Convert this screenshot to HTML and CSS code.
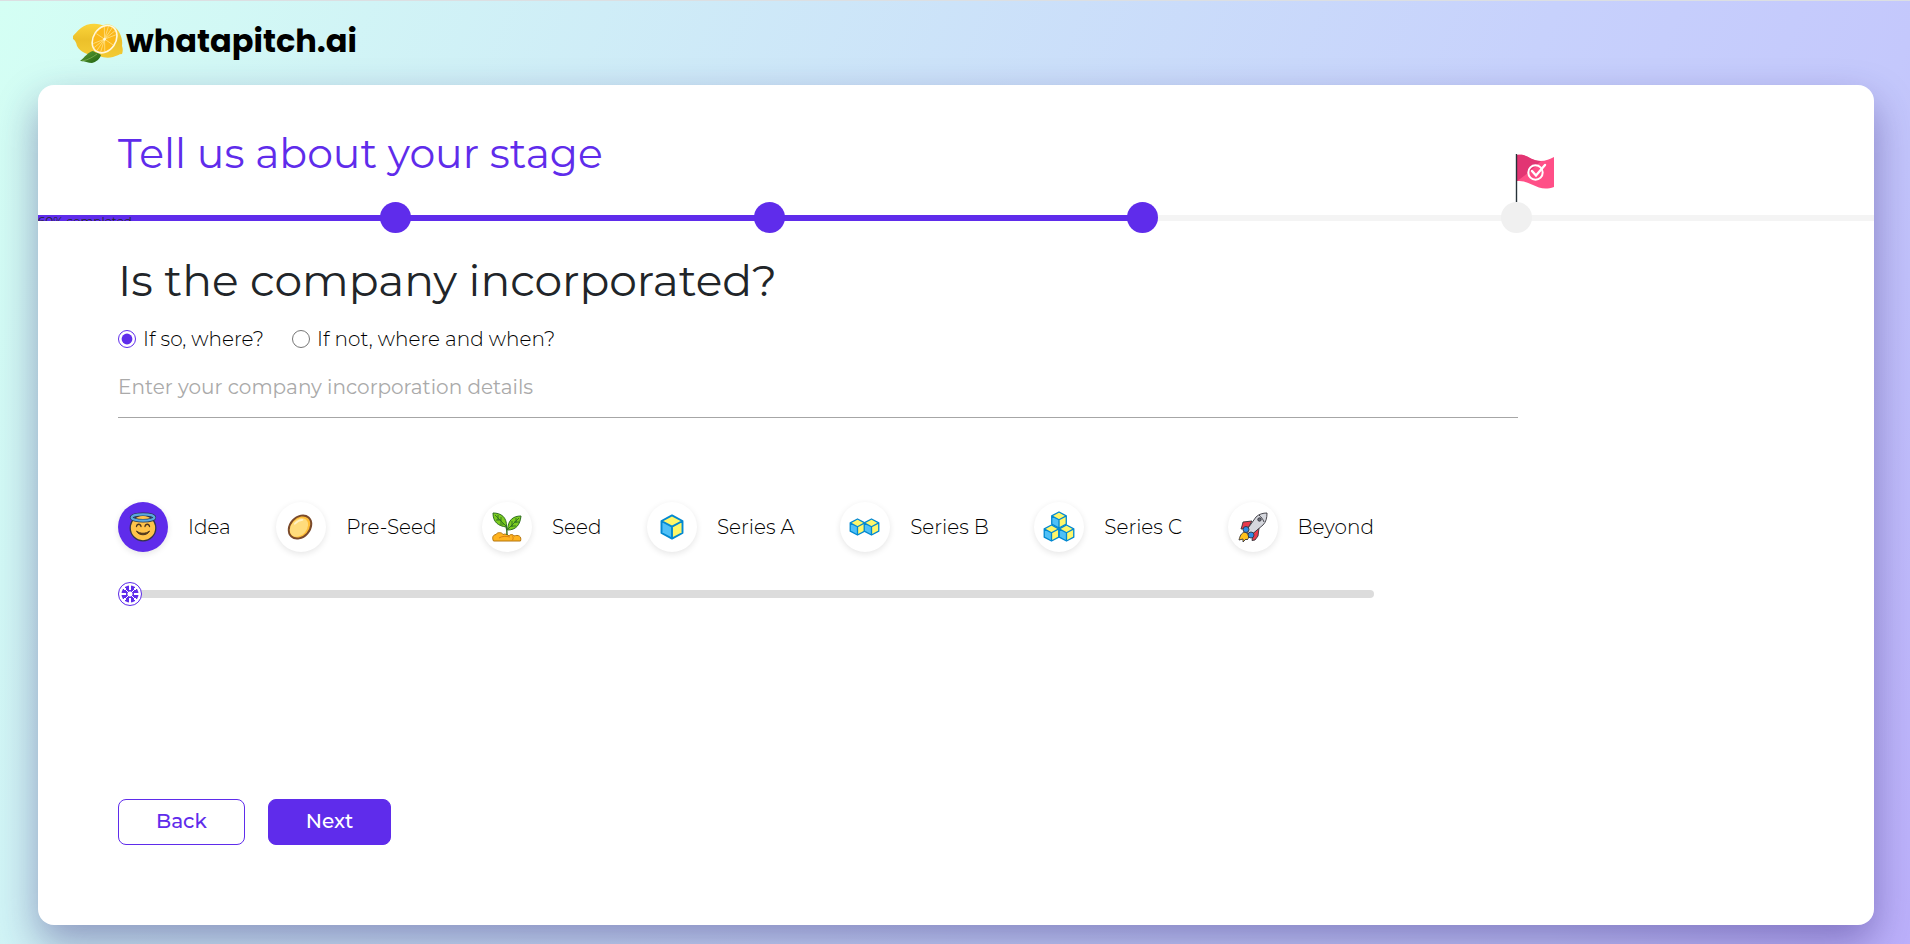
FILE: index.html
```html
<!DOCTYPE html>
<html lang="en">
<head>
<meta charset="utf-8">
<meta name="viewport" content="width=device-width, initial-scale=1">
<title>whatapitch.ai</title>
<link rel="stylesheet" href="styles.css">
</head>
<body>
<svg class="defs" aria-hidden="true">
  <symbol id="cube" viewBox="0 0 24 26">
    <path d="M12 1.4 22.5 7v12L12 24.6 1.5 19V7z" fill="#fff769"/>
    <path d="M1.5 7 12 12.6v12L1.5 19z" fill="#4fc0f7"/>
    <path d="M12 1.4 22.5 7v12L12 24.6 1.5 19V7zM1.5 7 12 12.6 22.5 7M12 12.6v12" fill="none" stroke="#0288d1" stroke-width="1.9" stroke-linejoin="round"/>
  </symbol>
</svg>
<header class="topbar">
  <a class="brand" href="#">
    <svg class="brand-mark" viewBox="0 0 52 42" aria-hidden="true">
      <defs>
        <linearGradient id="rind" x1="0" y1="0" x2="0" y2="1"><stop offset="0" stop-color="#fbd53b"/><stop offset=".5" stop-color="#ecc02a"/><stop offset="1" stop-color="#f3cb33"/></linearGradient>
        <linearGradient id="leaf" x1="0" y1="0" x2="1" y2="1"><stop offset="0" stop-color="#5d9c35"/><stop offset="1" stop-color="#226512"/></linearGradient>
      </defs>
      <path d="M1 14C3 12 5 9 9 6 15 1 26 0 34 5c6 5 4 20-3 26-8 4-21 2-26-7C4 20 3 18 1 17z" fill="url(#rind)"/>
      <path d="M21 14C24 5 33 0 41 4c7 4 10 13 9 20 1 3 1 5 0 8-3 0-5 2-9 3-7 2-16 0-19-7z" fill="url(#rind)"/>
      <g transform="rotate(34 32 18)">
        <ellipse cx="32" cy="17" rx="12" ry="15.5" fill="#fff7dc"/>
        <ellipse cx="32" cy="17" rx="10.4" ry="13.8" fill="#fbb91b"/>
        <path d="M32 3v28M22 17h20M25 7l14 20M39 7 25 27M28 4l8 26M36 4l-8 26" stroke="#ffe38c" stroke-width=".7"/>
        <circle cx="32" cy="17" r="1.4" fill="#fff7dc"/>
      </g>
      <path d="M8 39c5-4 8-9 13-10 3 2 6 2 8 4-1 4-5 7-9 8-4 0-7-2-12-2z" fill="url(#leaf)"/>
      <path d="M10 39c6-1 11-4 15-7" fill="none" stroke="#86b95b" stroke-width=".7"/>
    </svg>
    <span class="brand-name">whatapitch.ai</span>
  </a>
</header>

<main class="card">
  <h1 class="title">Tell us about your stage</h1>

  <div class="progress">
    <div class="progress-track">
      <div class="progress-fill" style="width:60%">60% completed</div>
    </div>
    <div class="steps">
      <span class="step done"></span>
      <span class="step done"></span>
      <span class="step done"></span>
      <span class="step">
        <svg class="flag" viewBox="0 0 40 48" aria-hidden="true">
          <path d="M2 1C12-1 15 7 25 7 31 7 35 5 39 3v30c-9 3-15 1-21-2C12 28 8 27 2 27z" fill="#ff4f87"/>
          <path d="M2 1C12-1 15 7 26 7 18 15 11 21 2 27z" fill="#e23573"/>
          <circle cx="20.500" cy="18.500" r="7.200" fill="none" stroke="#fff" stroke-width="2"/>
          <path d="m17 17 4 4.500L30 11" fill="none" stroke="#fff" stroke-width="2.400" stroke-linecap="round"/>
          <path d="M1.500 0v49" stroke="#263238" stroke-width="1.400"/>
        </svg>
      </span>
    </div>
  </div>

  <form class="form">
    <h2 class="question" id="question">Is the company incorporated?</h2>
    <div class="choices" role="radiogroup" aria-labelledby="question">
      <label class="choice"><input type="radio" name="incorporated" checked>If so, where?</label>
      <label class="choice"><input type="radio" name="incorporated">If not, where and when?</label>
    </div>
    <input class="details" type="text" aria-label="Company incorporation details" placeholder="Enter your company incorporation details">

    <div class="stage-picker">
      <ul class="stages">
        <li class="stage">
          <span class="stage-icon active">
            <svg width="28" height="30" viewBox="0 0 28 30" aria-hidden="true">
              <circle cx="14" cy="16" r="12.800" fill="#ffc34a" stroke="#33354a" stroke-width="1.300"/>
              <ellipse cx="14" cy="5.500" rx="11.400" ry="3.200" fill="none" stroke="#263853" stroke-width="3.600"/>
              <ellipse cx="14" cy="5.500" rx="11.400" ry="3.200" fill="none" stroke="#5ba9df" stroke-width="2.200"/>
              <path d="M7.500 14.500c.5-3 4-3 4.500 0M16 14.500c.5-3 4-3 4.500 0" fill="none" stroke="#4d3720" stroke-width="1.300" stroke-linecap="round"/>
              <path d="M7.500 19c3.500 3 9.500 3 13 0-2 5-11 5-13 0z" fill="#5e3c16" stroke="#4d3720"/>
            </svg>
          </span>Idea
        </li>
        <li class="stage">
          <span class="stage-icon">
            <svg width="28" height="28" viewBox="0 0 28 28" aria-hidden="true">
              <g transform="rotate(42 13 14)">
                <ellipse cx="13" cy="14" rx="9.800" ry="12.800" fill="#ffbd36" stroke="#7a4a2b" stroke-width="2"/>
                <ellipse cx="12.500" cy="15" rx="7.800" ry="10.500" fill="#ffdc7c"/>
                <path d="M7 15c0-4 1-6 3-8" fill="none" stroke="#fff1c4" stroke-width="1.800" stroke-linecap="round"/>
              </g>
            </svg>
          </span>Pre-Seed
        </li>
        <li class="stage">
          <span class="stage-icon">
            <svg width="30" height="30" viewBox="0 0 30 30" aria-hidden="true">
              <path d="M1.500 29c-1.500-3-1-6 2.500-6.500 1-2.500 6-2.500 7 0 2-1 5 0 6 1.500 1-2 4-2 5 0 4-1.500 8 0 6.500 5z" fill="#ffb31f" stroke="#b5760f"/>
              <path d="M20 28.500c2-2 1-4 0-5M7 26c3-2 7-2 11-1" fill="none" stroke="#d98210"/>
              <path d="M15 23c0-4 0-6-1-9" fill="none" stroke="#326c22" stroke-width="1.400"/>
              <path d="M1 1c8 0 14 4 13.500 14C6 14 1 10 1 1z" fill="#7ccc20" stroke="#2e6f1f"/>
              <path d="M29 4c-8 0-13 4-13.500 14C24 18 28 13 29 4z" fill="#7ccc20" stroke="#2e6f1f"/>
              <path d="m3 3 11 11M6 3v5M9 5v6M4 8h5M8 12h4M27 6 16 17M24 6v5M20 9v6M27 10h-5M24 14h-5" fill="none" stroke="#2e6f1f" stroke-width=".9"/>
            </svg>
          </span>Seed
        </li>
        <li class="stage">
          <span class="stage-icon">
            <svg width="24" height="26" aria-hidden="true"><use href="#cube" width="24" height="26"/></svg>
          </span>Series A
        </li>
        <li class="stage">
          <span class="stage-icon">
            <svg width="32" height="20" viewBox="0 0 32 20" aria-hidden="true"><use href="#cube" y="1" width="17" height="18"/><use href="#cube" x="14" y="1" width="17" height="18"/></svg>
          </span>Series B
        </li>
        <li class="stage">
          <span class="stage-icon">
            <svg width="32" height="32" viewBox="0 0 32 32" aria-hidden="true"><use href="#cube" x="7" y="0" width="18" height="18"/><use href="#cube" x="0" y="13" width="17" height="18"/><use href="#cube" x="15" y="13" width="17" height="18"/></svg>
          </span>Series C
        </li>
        <li class="stage">
          <span class="stage-icon">
            <svg width="30" height="30" viewBox="0 0 30 30" aria-hidden="true">
              <g stroke="#35343c" stroke-width=".9" stroke-linejoin="round">
                <path d="M14 9 5 10l-1 4-1 3 7-1zM21 16l-1 8-3 4-3 .500 1-7z" fill="#e8394c"/>
                <path d="M7 20c-4 1-5 4-6 8l4-1v3l3-3 1 1c2-2 2-4 1-6z" fill="#ffc21d"/>
                <path d="M8 19 18 5c3-3 7-4 11-4 0 5-1 9-4 12L12 24z" fill="#d5d7dd"/>
                <path d="M21 3c2 2 4 4 5 7" fill="none"/>
                <circle cx="8" cy="17.500" r="3" fill="#2f8be6"/>
                <circle cx="13" cy="23" r="3" fill="#2f8be6"/>
                <circle cx="21.500" cy="7.500" r="1.700" fill="#6b6f7b"/>
              </g>
            </svg>
          </span>Beyond
        </li>
      </ul>
      <input class="slider" type="range" min="0" max="6" value="0" aria-label="Company stage">
    </div>

    <div class="actions">
      <button class="btn btn-outline" type="button">Back</button>
      <button class="btn btn-solid" type="submit">Next</button>
    </div>
  </form>
</main>
</body>
</html>
```
FILE: styles.css
```css
:root {
  --accent: #5f2ceb;
  --ink: #212529;
}

* {
  box-sizing: border-box;
}

body {
  margin: 0;
  min-height: 100vh;
  display: flex;
  flex-direction: column;
  border-top: 1px solid #dcdfe2;
  background: linear-gradient(112deg, #d4fff4 0%, #c7d1fc 68%, #c4c8fc 84%, #bcb0fb 100%);
  color: var(--ink);
  font-family: Montserrat, Inter, "Open Sans", sans-serif;
  font-size: 20px;
  font-weight: 400;
  line-height: 24px;
}

.defs {
  position: absolute;
  width: 0;
  height: 0;
}

.topbar {
  height: 84px;
  padding: 21px 72px 0;
}

.brand {
  display: inline-flex;
  align-items: flex-start;
  gap: 2px;
  color: #000;
  text-decoration: none;
}

.brand-mark {
  width: 52px;
  height: 42px;
}

.brand-name {
  font-family: Poppins, Inter, sans-serif;
  font-size: 32px;
  font-weight: 700;
  line-height: 38px;
}

.card {
  flex: 1;
  display: flex;
  flex-direction: column;
  margin: 0 36px 19px 38px;
  padding: 44px 0 80px;
  border-radius: 16px;
  background: #fff;
  box-shadow: 0 18px 40px rgba(40, 20, 110, .4);
}

.title {
  margin: 0 80px 25px;
  color: var(--accent);
  font-size: 41px;
  font-weight: 400;
  line-height: 48px;
}

.progress {
  display: grid;
  align-items: center;
}

.progress-track,
.steps {
  grid-area: 1 / 1;
}

.progress-track {
  height: 6px;
  background: #f4f4f4;
}

.progress-fill {
  height: 6px;
  overflow: hidden;
  background: var(--accent);
  font-size: 12px;
  line-height: 12px;
}

.steps {
  display: flex;
  justify-content: space-evenly;
}

.step {
  position: relative;
  width: 31px;
  height: 31px;
  border-radius: 50%;
  background: #f0f0f0;
}

.step.done {
  background: var(--accent);
}

.flag {
  position: absolute;
  left: 14px;
  bottom: 100%;
  width: 40px;
  height: 48px;
}

.form {
  flex: 1;
  display: flex;
  flex-direction: column;
  padding: 19px 80px 0;
}

.question {
  margin: 0 0 19px;
  font-size: 44px;
  font-weight: 400;
  line-height: 56px;
}

.choices {
  display: flex;
  gap: 28px;
  color: #000;
  font-weight: 300;
}

.choice {
  display: flex;
  align-items: center;
  gap: 7px;
}

.choice input {
  width: 18px;
  height: 18px;
  margin: 0;
  accent-color: var(--accent);
}

.details {
  width: 100%;
  max-width: 1400px;
  height: 55px;
  margin-top: 12px;
  padding: 0 0 6px;
  border: 0;
  border-bottom: 1px solid #a6a6a6;
  background: none;
  color: var(--ink);
  font: inherit;
}

.details::placeholder {
  color: #aaa;
  opacity: 1;
}

.stage-picker {
  width: 100%;
  max-width: 1256px;
  margin: 84px 0;
}

.stages {
  display: flex;
  justify-content: space-between;
  margin: 0 0 30px;
  padding: 0;
  color: #000;
  font-weight: 300;
  list-style: none;
}

.stage {
  display: flex;
  align-items: center;
  gap: 20px;
}

.stage-icon {
  display: grid;
  place-items: center;
  width: 50px;
  height: 50px;
  border-radius: 50%;
  background: #fff;
  box-shadow: 0 2px 6px rgba(0, 0, 0, .1);
}

.stage-icon.active {
  background: var(--accent);
}

.slider {
  appearance: none;
  display: block;
  width: 100%;
  height: 24px;
  margin: 0;
  background: none;
}

.slider::-webkit-slider-runnable-track {
  height: 8px;
  border-radius: 4px;
  background: #dcdcdc;
}

.slider::-webkit-slider-thumb {
  appearance: none;
  width: 24px;
  height: 24px;
  margin-top: -8px;
  border: 1px solid var(--accent);
  border-radius: 50%;
  background:
    radial-gradient(circle, #fff 0 2px, transparent 3px 8px, #fff 9px),
    repeating-conic-gradient(from -7deg, #fff 0 14deg, var(--accent) 14deg 45deg);
}

.actions {
  display: flex;
  gap: 23px;
  margin-top: auto;
}

.btn {
  height: 46px;
  padding: 0 37px 2px;
  border: 1px solid var(--accent);
  border-radius: 8px;
  font: inherit;
  font-weight: 500;
}

.btn-outline {
  background: #fff;
  color: var(--accent);
}

.btn-solid {
  background: var(--accent);
  color: #fff;
}
```
